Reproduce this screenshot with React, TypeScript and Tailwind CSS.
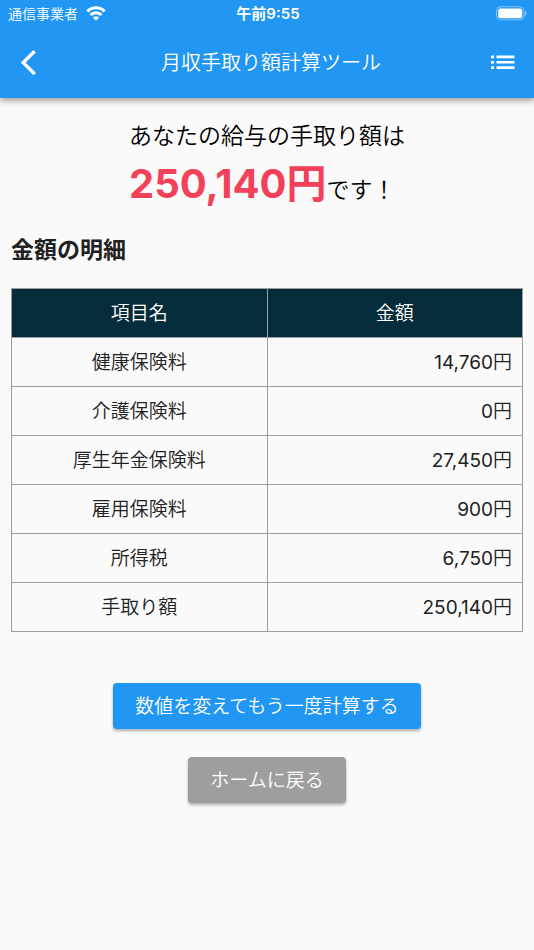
import React from 'react';

type DetailRow = {
    label: string;
    amount: string;
};

const details: DetailRow[] = [
    { label: '健康保険料', amount: '14,760' },
    { label: '介護保険料', amount: '0' },
    { label: '厚生年金保険料', amount: '27,450' },
    { label: '雇用保険料', amount: '900' },
    { label: '所得税', amount: '6,750' },
    { label: '手取り額', amount: '250,140' },
];

const WifiIcon: React.FC = () => (
    <svg className="h-4 w-5" viewBox="0 0 20 16" fill="none" stroke="white" strokeWidth="3">
        <path d="M1.4 5.4a12.2 12.2 0 0 1 17.2 0" />
        <path d="M4.5 9a7.8 7.8 0 0 1 11 0" />
        <path d="M10 14.8 7 11.8a4.3 4.3 0 0 1 6 0z" fill="white" stroke="none" />
    </svg>
);

const BatteryIcon: React.FC = () => (
    <svg className="h-4 w-8" viewBox="0 0 32 16" fill="none">
        <rect x="0.5" y="0.7" width="27.4" height="13.2" rx="4" stroke="white" strokeOpacity="0.45" />
        <rect x="2.2" y="2.4" width="24" height="9.8" rx="2" fill="white" />
        <path d="M29 5c2 .8 2 4.2 0 5z" fill="white" fillOpacity="0.5" />
    </svg>
);

const StatusBar: React.FC = () => (
    <div className="grid h-7 grid-cols-3 items-center pr-1.5 pl-2 text-sm">
        <div className="flex items-center gap-2">
            <span className="font-[350]">通信事業者</span>
            <WifiIcon />
        </div>
        <span className="text-center text-[15px] font-semibold">午前9:55</span>
        <div className="flex justify-end">
            <BatteryIcon />
        </div>
    </div>
);

const Header: React.FC = () => (
    <header className="bg-[#2196f3] text-white shadow-[0_3px_6px_rgba(0,0,0,0.35)]">
        <StatusBar />
        <div className="flex h-[70px] items-center justify-between px-4">
            <button type="button" aria-label="戻る" className="flex w-10 justify-start">
                <svg className="h-7 w-6" viewBox="0 0 24 28" fill="none" stroke="white" strokeWidth="3.4">
                    <path d="M18.7 2.2 7.2 13.6l11.5 11.4" />
                </svg>
            </button>
            <h1 className="text-xl font-[350]">月収手取り額計算ツール</h1>
            <button type="button" aria-label="メニュー" className="flex w-8 justify-end">
                <svg className="h-6 w-7" viewBox="0 0 28 24" fill="white">
                    <path d="M1 4.5h3v2.7H1zM1 9.9h3v2.7H1zM1 15.3h3V18H1zM6.5 4.5h18v2.7h-18zM6.5 9.9h18v2.7h-18zM6.5 15.3h18V18h-18z" />
                </svg>
            </button>
        </div>
    </header>
);

const App: React.FC = () => (
    <div className="min-h-screen bg-[#fafafa] font-['Inter','Noto_Sans_CJK_JP',sans-serif] text-[#212121]">
        <Header />
        <main className="px-[11px]">
            <div className="mx-auto mt-5 w-fit text-black">
                <p className="text-[23px] leading-9 font-[350]">あなたの給与の手取り額は</p>
                <p className="text-[23px] leading-[60px] font-[350]">
                    <strong className="text-[40px] font-bold text-[#f34159]">250,140円</strong>
                    です！
                </p>
            </div>
            <h2 className="mt-3 text-[23px] leading-9 font-bold">金額の明細</h2>
            <table className="mt-5 w-full table-fixed border-collapse text-[19px] leading-7">
                <thead className="bg-[#052c3a] text-white">
                    <tr className="h-[49px]">
                        <th className="border border-[#9e9e9e] pt-[2px] font-[350]">項目名</th>
                        <th className="border border-[#9e9e9e] pt-[2px] font-[350]">金額</th>
                    </tr>
                </thead>
                <tbody>
                    {details.map(row => (
                        <tr key={row.label} className="h-[49px]">
                            <td className="border border-[#9e9e9e] pt-[2px] text-center font-[350]">{row.label}</td>
                            <td className="border border-[#9e9e9e] pt-[2px] pr-[10px] text-right">
                                {row.amount}
                                <span className="font-[350]">円</span>
                            </td>
                        </tr>
                    ))}
                </tbody>
            </table>
            <div className="mt-[51px] flex flex-col items-center gap-7 text-[19px] leading-7 font-[350] text-white">
                <button type="button" className="h-[46px] rounded bg-[#2196f3] px-[22px] pt-[2px] shadow-[0_2px_3px_rgba(0,0,0,0.3)]">
                    数値を変えてもう一度計算する
                </button>
                <button type="button" className="h-[46px] rounded bg-[#9e9e9e] px-[22px] pt-[2px] shadow-[0_2px_3px_rgba(0,0,0,0.3)]">
                    ホームに戻る
                </button>
            </div>
        </main>
    </div>
);

export default App;
